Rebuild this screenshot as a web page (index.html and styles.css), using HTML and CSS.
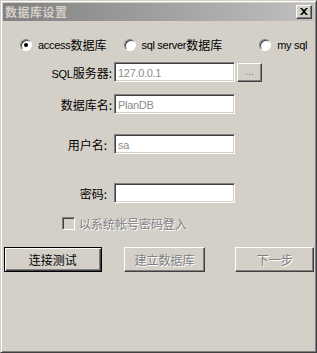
FILE: index.html
```html
<!DOCTYPE html>
<html lang="zh-CN">
<head>
    <meta charset="UTF-8">
    <title>数据库设置</title>
    <link rel="stylesheet" href="styles.css">
</head>
<body>
    <div class="window">
        <div class="titlebar">
            <span class="title">数据库设置</span>
            <span class="close">
                <svg width="8" height="7" viewBox="0 0 8 7"><path d="M0 0h2l2 2 2-2h2L5 3.5 8 7H6L4 5 2 7H0l3-3.5z" fill="#000"/></svg>
            </span>
        </div>
        <div class="content">
            <div class="radios">
                <label class="radio r1"><span class="dot on"></span><span class="en">access</span>数据库</label>
                <label class="radio r2"><span class="dot"></span><span class="en">sql server </span>数据库</label>
                <label class="radio r3"><span class="dot"></span><span class="en">my sql</span></label>
            </div>

            <div class="field f-sql">
                <span class="lbl"><span class="en">SQL</span>服务器:</span>
                <div class="text"><span class="en">127.0.0.1</span></div>
                <span class="btn small">...</span>
            </div>
            <div class="field f-db">
                <span class="lbl">数据库名:</span>
                <div class="text"><span class="en">PlanDB</span></div>
            </div>
            <div class="field f-user">
                <span class="lbl short">用户名:</span>
                <div class="text"><span class="en">sa</span></div>
            </div>
            <div class="field f-pwd">
                <span class="lbl short">密码:</span>
                <div class="text"></div>
            </div>

            <div class="check">
                <span class="box"></span>
                <span class="disabled">以系统帐号密码登入</span>
            </div>

            <div class="actions">
                <span class="btn default b1">连接测试</span>
                <span class="btn b2 disabled">建立数据库</span>
                <span class="btn b3 disabled">下一步</span>
            </div>
        </div>
    </div>
</body>
</html>
```

FILE: styles.css
```css
body {
    margin: 0;
    background: #d4d0c8;
    font-family: "Noto Sans CJK SC", "Liberation Sans", sans-serif;
    font-size: 12px;
    color: #000;
}
.en {
    font-family: "Liberation Sans", sans-serif;
    font-size: 11px;
    letter-spacing: -0.3px;
}
.window {
    width: 317px;
    height: 353px;
    box-sizing: border-box;
    background: #d4d0c8;
    border-top: 1px solid #d4d0c8;
    border-left: 1px solid #d4d0c8;
    border-right: 1px solid #404040;
    border-bottom: 1px solid #404040;
    box-shadow: inset 1px 1px 0 #fff, inset -1px -1px 0 #808080;
    padding: 2px;
}
.titlebar {
    height: 18px;
    background: linear-gradient(to right, #808080, #c0c0c0);
    display: flex;
    align-items: center;
    justify-content: space-between;
    padding: 0 2px 0 2px;
}
.title {
    color: #d4d0c8;
    font-weight: bold;
    font-size: 12px;
    line-height: 18px;
    letter-spacing: 0.5px;
}
.close {
    width: 16px;
    height: 14px;
    box-sizing: border-box;
    background: #d4d0c8;
    border-top: 1px solid #fff;
    border-left: 1px solid #fff;
    border-right: 1px solid #404040;
    border-bottom: 1px solid #404040;
    box-shadow: inset -1px -1px 0 #808080;
    display: flex;
    align-items: center;
    justify-content: center;
}
.close svg { display: block; margin: 0 1px 1px 0; }

.radios {
    display: flex;
    height: 14px;
    margin-top: 17px;
    align-items: center;
}
.radio {
    display: flex;
    align-items: center;
    line-height: 14px;
}
.r1 { margin-left: 17px; }
.r2 { margin-left: 18px; }
.r3 { margin-left: 37px; }
.dot {
    width: 12px;
    height: 12px;
    box-sizing: border-box;
    border-radius: 50%;
    background: #fff;
    border: 1px solid;
    border-color: #808080 #fff #fff #808080;
    box-shadow: inset 1px 1px 0 #404040;
    margin-right: 6px;
    position: relative;
}
.dot.on::after {
    content: "";
    position: absolute;
    left: 3px;
    top: 3px;
    width: 4px;
    height: 4px;
    border-radius: 50%;
    background: #000;
}
.r2 .dot { margin-right: 5px; }
.r3 .dot { margin-right: 6px; }

.field {
    display: flex;
    align-items: center;
    height: 20px;
}
.f-sql { margin-top: 10px; }
.f-db { margin-top: 12px; }
.f-user { margin-top: 20px; }
.f-pwd { margin-top: 29px; }
.lbl {
    width: 111px;
    text-align: right;
    padding-right: 2px;
    box-sizing: border-box;
    white-space: nowrap;
}
.lbl.short { padding-right: 7px; }
.text {
    width: 121px;
    height: 20px;
    box-sizing: border-box;
    background: #fff;
    border-top: 1px solid #808080;
    border-left: 1px solid #808080;
    border-right: 1px solid #fff;
    border-bottom: 1px solid #fff;
    box-shadow: inset 1px 1px 0 #404040, inset -1px -1px 0 #d4d0c8;
    padding: 0 3px;
    color: #8c8c8c;
    line-height: 18px;
}
.btn {
    box-sizing: border-box;
    background: #d4d0c8;
    border-top: 1px solid #fff;
    border-left: 1px solid #fff;
    border-right: 1px solid #404040;
    border-bottom: 1px solid #404040;
    box-shadow: inset -1px -1px 0 #808080;
    display: flex;
    align-items: center;
    justify-content: center;
}
.btn.small {
    width: 25px;
    height: 19px;
    margin-left: 2px;
    font-family: "Liberation Sans", sans-serif;
    font-size: 11px;
    color: #808080;
    padding-bottom: 2px;
}
.check {
    display: flex;
    align-items: center;
    height: 13px;
    margin-top: 14px;
    margin-left: 59px;
}
.box {
    width: 13px;
    height: 13px;
    box-sizing: border-box;
    background: #d4d0c8;
    border-top: 1px solid #808080;
    border-left: 1px solid #808080;
    border-right: 1px solid #fff;
    border-bottom: 1px solid #fff;
    box-shadow: inset 1px 1px 0 #404040, inset -1px -1px 0 #d4d0c8;
    margin-right: 4px;
}
.disabled {
    color: #808080;
    text-shadow: 1px 1px 0 #fff;
}
.actions {
    display: flex;
    margin-top: 17px;
    height: 25px;
}
.actions .btn { height: 25px; }
.b1 { width: 98px; margin-left: 1px; }
.b2 { width: 82px; margin-left: 22px; }
.b3 { width: 79px; margin-left: 30px; }
.btn.default {
    border: 1px solid #000;
    box-shadow: inset 1px 1px 0 #fff, inset -1px -1px 0 #404040, inset -2px -2px 0 #808080;
}
```
